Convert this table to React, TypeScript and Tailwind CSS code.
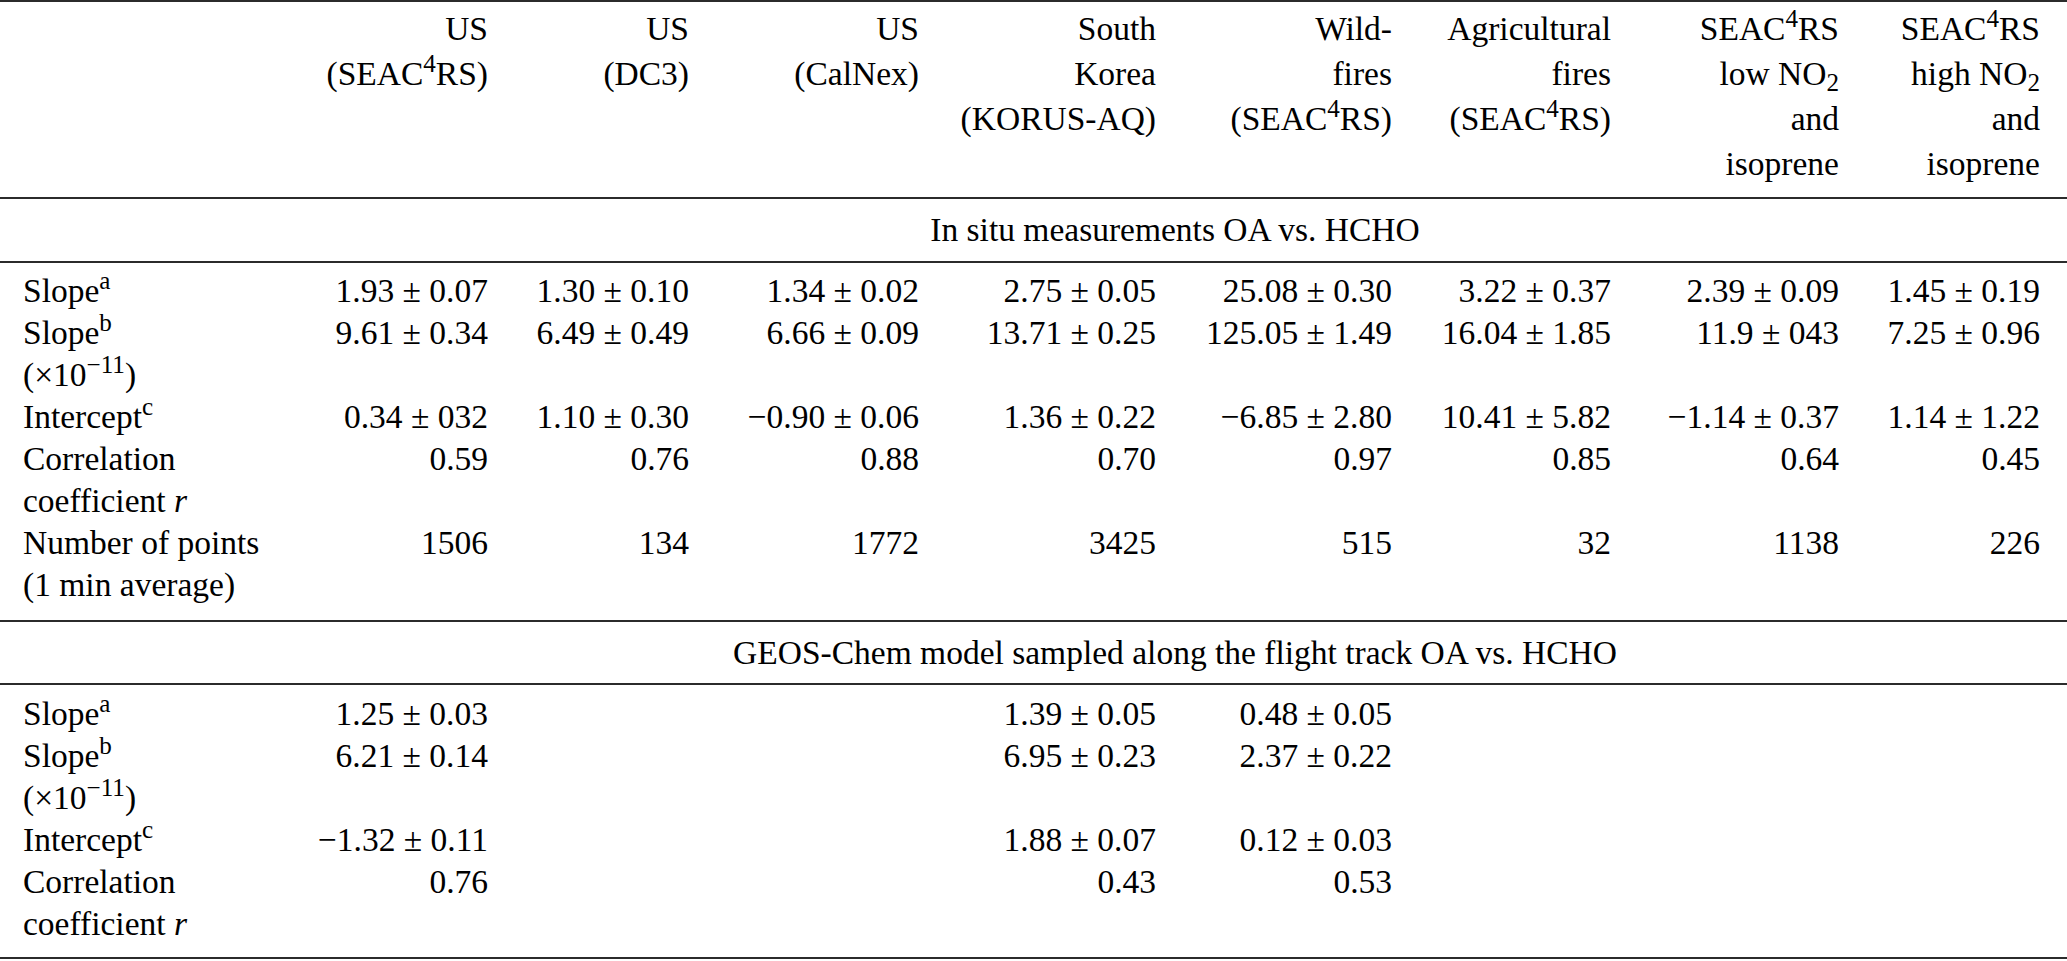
import React from 'react';

type Row = {
  label: React.ReactNode;
  values: string[];
};

const GRID =
  'grid grid-cols-[247px_218px_201px_230px_237px_236px_219px_228px_201px] pl-[23px]';

const headers: React.ReactNode[] = [
  <>US<br />(SEAC<sup>4</sup>RS)</>,
  <>US<br />(DC3)</>,
  <>US<br />(CalNex)</>,
  <>South<br />Korea<br />(KORUS-AQ)</>,
  <>Wild-<br />fires<br />(SEAC<sup>4</sup>RS)</>,
  <>Agricultural<br />fires<br />(SEAC<sup>4</sup>RS)</>,
  <>SEAC<sup>4</sup>RS<br />low NO<sub>2</sub><br />and<br />isoprene</>,
  <>SEAC<sup>4</sup>RS<br />high NO<sub>2</sub><br />and<br />isoprene</>,
];

const slopeA = <>Slope<sup>a</sup></>;
const slopeB = <>Slope<sup>b</sup><br />(×10<sup>−11</sup>)</>;
const intercept = <>Intercept<sup>c</sup></>;
const correlation = <>Correlation<br />coefficient <i>r</i></>;

const measured: Row[] = [
  { label: slopeA, values: ['1.93 ± 0.07', '1.30 ± 0.10', '1.34 ± 0.02', '2.75 ± 0.05', '25.08 ± 0.30', '3.22 ± 0.37', '2.39 ± 0.09', '1.45 ± 0.19'] },
  { label: slopeB, values: ['9.61 ± 0.34', '6.49 ± 0.49', '6.66 ± 0.09', '13.71 ± 0.25', '125.05 ± 1.49', '16.04 ± 1.85', '11.9 ± 043', '7.25 ± 0.96'] },
  { label: intercept, values: ['0.34 ± 032', '1.10 ± 0.30', '−0.90 ± 0.06', '1.36 ± 0.22', '−6.85 ± 2.80', '10.41 ± 5.82', '−1.14 ± 0.37', '1.14 ± 1.22'] },
  { label: correlation, values: ['0.59', '0.76', '0.88', '0.70', '0.97', '0.85', '0.64', '0.45'] },
  { label: <>Number of points<br />(1 min average)</>, values: ['1506', '134', '1772', '3425', '515', '32', '1138', '226'] },
];

const modelled: Row[] = [
  { label: slopeA, values: ['1.25 ± 0.03', '', '', '1.39 ± 0.05', '0.48 ± 0.05', '', '', ''] },
  { label: slopeB, values: ['6.21 ± 0.14', '', '', '6.95 ± 0.23', '2.37 ± 0.22', '', '', ''] },
  { label: intercept, values: ['−1.32 ± 0.11', '', '', '1.88 ± 0.07', '0.12 ± 0.03', '', '', ''] },
  { label: correlation, values: ['0.76', '', '', '0.43', '0.53', '', '', ''] },
];

const Rule = () => <div className="h-[2px] bg-[#2b2b2b]" />;

const SectionTitle = ({ children, height }: { children: React.ReactNode; height: string }) => (
  <div className={`${GRID} items-center ${height}`}>
    <div className="col-start-2 col-span-8 pl-[40px] text-center leading-[42px]">{children}</div>
  </div>
);

const DataBlock = ({ rows, className }: { rows: Row[]; className: string }) => (
  <div className={className}>
    {rows.map((row, i) => (
      <div key={i} className={`${GRID} leading-[42px]`}>
        <div className="text-left">{row.label}</div>
        {row.values.map((v, j) => (
          <div key={j} className="text-right whitespace-nowrap">
            {v}
          </div>
        ))}
      </div>
    ))}
  </div>
);

export default function App() {
  return (
    <div className="w-[2067px] bg-white text-black font-['Liberation_Serif',serif] text-[33.5px]">
      <Rule />
      <div className={`${GRID} h-[195px] pt-[4px] leading-[45px]`}>
        <div />
        {headers.map((h, i) => (
          <div key={i} className="text-right whitespace-nowrap">
            {h}
          </div>
        ))}
      </div>
      <Rule />
      <SectionTitle height="h-[62px]">In situ measurements OA vs. HCHO</SectionTitle>
      <Rule />
      <DataBlock rows={measured} className="h-[357px] pt-[7px]" />
      <Rule />
      <SectionTitle height="h-[61px]">GEOS-Chem model sampled along the flight track OA vs. HCHO</SectionTitle>
      <Rule />
      <DataBlock rows={modelled} className="h-[272px] pt-[8px]" />
      <Rule />
    </div>
  );
}
